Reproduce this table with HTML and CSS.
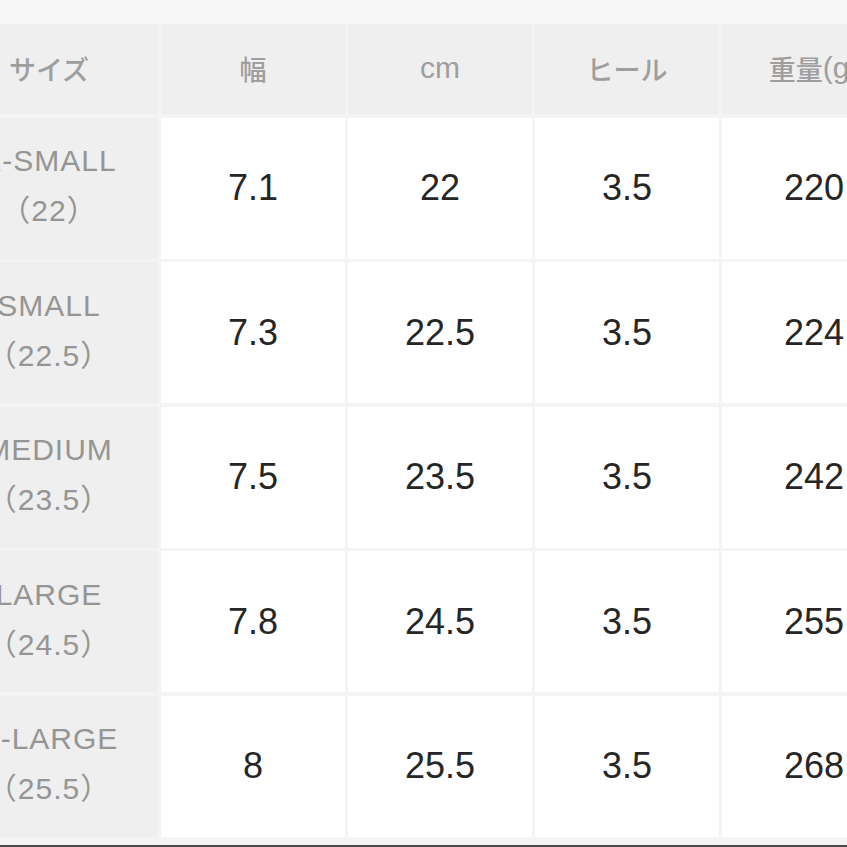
FILE: index.html
```html
<!DOCTYPE html>
<html lang="ja">
<head>
<meta charset="utf-8">
<link rel="stylesheet" href="styles.css">
</head>
<body>
<div class="page">
  <div class="table">
    <div class="cell head">サイズ</div>
    <div class="cell head">幅</div>
    <div class="cell head"><span class="latin">cm</span></div>
    <div class="cell head">ヒール</div>
    <div class="cell head">重量<span class="latin">(g)</span></div>

    <div class="cell label"><span>X-SMALL</span><span>（22）</span></div>
    <div class="cell data">7.1</div>
    <div class="cell data">22</div>
    <div class="cell data">3.5</div>
    <div class="cell data">220</div>

    <div class="cell label"><span>SMALL</span><span>（22.5）</span></div>
    <div class="cell data">7.3</div>
    <div class="cell data">22.5</div>
    <div class="cell data">3.5</div>
    <div class="cell data">224</div>

    <div class="cell label"><span>MEDIUM</span><span>（23.5）</span></div>
    <div class="cell data">7.5</div>
    <div class="cell data">23.5</div>
    <div class="cell data">3.5</div>
    <div class="cell data">242</div>

    <div class="cell label"><span>LARGE</span><span>（24.5）</span></div>
    <div class="cell data">7.8</div>
    <div class="cell data">24.5</div>
    <div class="cell data">3.5</div>
    <div class="cell data">255</div>

    <div class="cell label"><span>X-LARGE</span><span>（25.5）</span></div>
    <div class="cell data">8</div>
    <div class="cell data">25.5</div>
    <div class="cell data">3.5</div>
    <div class="cell data">268</div>
  </div>
</div>
</body>
</html>
```

FILE: styles.css
```css
html, body {
  margin: 0;
  padding: 0;
  background: #f7f7f7;
  overflow: hidden;
}
body {
  width: 847px;
  height: 847px;
  font-family: "Liberation Sans", "Noto Sans CJK JP", sans-serif;
}
.page {
  width: 847px;
  height: 847px;
  box-sizing: border-box;
  padding-top: 24px;
  border-bottom: 2px solid #4a4a4a;
  overflow: hidden;
  background: #f7f7f7;
}
.table {
  display: grid;
  grid-template-columns: 218px 184px 184px 184px 184px;
  grid-template-rows: 90px repeat(5, 141px);
  gap: 3.5px 3px;
  margin-left: -60px;
  width: 968px;
  background: #f4f4f4;
  padding-bottom: 8px;
}
.cell {
  display: flex;
  align-items: center;
  justify-content: center;
  text-align: center;
}
.head {
  background: #efefef;
  color: #9e9e9e;
  font-family: "Noto Sans CJK JP", "Liberation Sans", sans-serif;
  font-size: 27px;
  font-weight: 500;
  padding-bottom: 2px;
}
.head .latin {
  font-family: "Liberation Sans", sans-serif;
  font-size: 30px;
  font-weight: 400;
}
.label {
  background: #efefef;
  color: #959595;
  font-size: 30px;
  letter-spacing: 1px;
  flex-direction: column;
  line-height: 50px;
  padding-bottom: 4px;
}
.data {
  background: #ffffff;
  color: #262626;
  font-size: 36px;
}
```
